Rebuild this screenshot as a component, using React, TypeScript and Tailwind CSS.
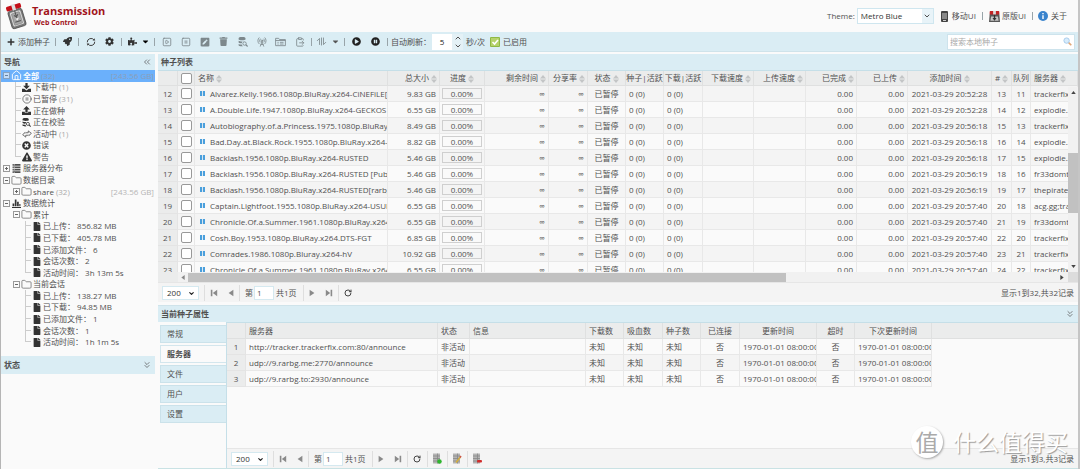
import React from "react";
import {
  FaPlus, FaRocket, FaCog, FaPuzzlePiece, FaCaretDown, FaTrash, FaPlayCircle, FaPauseCircle,
  FaTimesCircle, FaExclamationTriangle, FaFile, FaPenSquare,
} from "react-icons/fa";
import {
  House, CirclePause, Folder, SquarePlay, SquarePause, RadioTower, ClipboardPaste,
  ChevronsLeft, ChevronsDown, ChevronDown, ChevronUp, RotateCw,
} from "lucide-react";

const torrents: [number, string, string, string, number, string][] = [
  [12, "Alvarez.Kelly.1966.1080p.BluRay.x264-CiNEFiLE[rarbg]", "9.83 GB", "20:52:28", 13, "trackerfix.com"],
  [13, "A.Double.Life.1947.1080p.BluRay.x264-GECKOS", "6.55 GB", "20:52:28", 14, "explodie.org"],
  [14, "Autobiography.of.a.Princess.1975.1080p.BluRay.x264", "8.49 GB", "20:56:18", 15, "trackerfix.com"],
  [15, "Bad.Day.at.Black.Rock.1955.1080p.BluRay.x264-AMIABLE", "8.82 GB", "20:56:18", 16, "explodie.org"],
  [16, "Backlash.1956.1080p.BluRay.x264-RUSTED", "5.46 GB", "20:56:18", 17, "explodie.org"],
  [17, "Backlash.1956.1080p.BluRay.x264-RUSTED [PublicHD]", "5.46 GB", "20:56:19", 18, "fr33domtracker"],
  [18, "Backlash.1956.1080p.BluRay.x264-RUSTED[rarbg]", "5.46 GB", "20:56:19", 19, "thepiratebay"],
  [19, "Captain.Lightfoot.1955.1080p.BluRay.x264-USURY", "6.55 GB", "20:57:40", 20, "acg.gg;tracker"],
  [20, "Chronicle.Of.a.Summer.1961.1080p.BluRay.x264", "6.55 GB", "20:57:40", 21, "fr33domtracker"],
  [21, "Cosh.Boy.1953.1080p.BluRay.x264.DTS-FGT", "6.85 GB", "20:57:40", 22, "trackerfix.com"],
  [22, "Comrades.1986.1080p.Bluray.x264-hV", "10.92 GB", "20:57:40", 23, "trackerfix.com"],
  [23, "Chronicle.Of.a.Summer.1961.1080p.BluRay.x264-FGT", "6.55 GB", "20:57:40", 24, "trackerfix.com"],
];

const trackers = [
  "http://tracker.trackerfix.com:80/announce",
  "udp://9.rarbg.me:2770/announce",
  "udp://9.rarbg.to:2930/announce",
];

type IconProps = { className?: string };

const DownloadIcon = ({ className }: IconProps) => (
  <svg viewBox="0 0 16 16" className={className} fill="currentColor">
    <path d="M6 0h4v5h4L8 11 2 5h4zM0 10h4l4 3.500 4-3.500h4v6H0z" />
  </svg>
);
const UploadIcon = ({ className }: IconProps) => (
  <svg viewBox="0 0 16 16" className={className} fill="currentColor">
    <path d="M6 11h4V6h4L8 0 2 6h4zM0 10h5v2h6v-2h5v6H0z" />
  </svg>
);
const VerifyIcon = ({ className }: IconProps) => (
  <svg viewBox="0 0 16 16" className={className} fill="currentColor">
    <path d="M1 2c0-2.700 11-2.700 11 0v2c0 1.500-11 1.500-11 0zM1 6c2 1.400 7 1.300 9 .600A4 4 0 0 0 6 10c-3 .300-5-.500-5-1.500zM1 11c1 .800 3 1 5 1 .300 1 1 2 2 2.800-3 .300-7 0-7-1.500z" />
    <circle cx="10.500" cy="10.500" r="2.700" fill="none" stroke="currentColor" strokeWidth="1.400" />
    <path d="m12 13 1.300-1.300L16 14.500 14.700 16z" />
  </svg>
);
const ActiveIcon = ({ className }: IconProps) => (
  <svg viewBox="0 0 16 16" className={className} fill="none" stroke="currentColor" strokeWidth="1.300" strokeLinejoin="round">
    <path d="M6 6h4V3l5 4-4 3.500V9M10 10H6v3L1 9l4-3.500V7" />
  </svg>
);
const ServersIcon = ({ className }: IconProps) => (
  <svg viewBox="0 0 16 16" className={className} fill="currentColor">
    <path d="M1 0h14v3H1zM1 4.300h14v3H1zM1 8.600h14v3H1zM1 13h14v3H1z" />
    <path d="M3 1h2v1H3zM3 5.300h2v1H3zM3 9.600h2v1H3zM3 14h2v1H3z" fill="#fafafa" />
  </svg>
);
const StatsIcon = ({ className }: IconProps) => (
  <svg viewBox="0 0 16 16" className={className} fill="currentColor">
    <path d="M0 14h16v2H0zM1 8h3v5H1zM5 1h3v12H5zM9 5h3v8H9zM13 9h2v4h-2z" />
  </svg>
);
const FolderListIcon = ({ className }: IconProps) => (
  <svg viewBox="0 0 18 16" className={className} fill="none" stroke="currentColor" strokeWidth="1.400">
    <path d="M1 14V2h5l1.500 2H17v10zM1 5.500h16M4 8.500h2M8 8.500h6M4 11.300h2M8 11.300h6" />
  </svg>
);
const RefreshIcon = ({ className }: IconProps) => (
  <svg viewBox="0 0 16 16" className={className} fill="none" stroke="currentColor" strokeWidth="1.600">
    <path d="M2 8.500A6 6 0 0 1 13 5M14 7.500A6 6 0 0 1 3 11" />
    <path d="M10.500 5.500h4.300L13.500 2zM5.500 10.500H1.200L2.500 14z" fill="currentColor" stroke="none" />
  </svg>
);
const ArrowsIcon = ({ className }: IconProps) => (
  <svg viewBox="0 0 18 16" className={className} fill="none" stroke="currentColor" strokeWidth="1.500">
    <path d="M1 7l4.500-4.500V14M9 1v14M12.500 1v12.500L17 9" />
  </svg>
);
const Logo = ({ className }: IconProps) => (
  <svg viewBox="0 0 64 78" className={className}>
    <g transform="rotate(-17 32 40)">
      <rect x="11" y="19" width="42" height="52" rx="6" fill="#777" stroke="#454545" strokeWidth="2" />
      <rect x="16" y="24" width="32" height="41" rx="3" fill="#d8d8d8" />
      <rect x="20" y="28" width="24" height="34" rx="2" fill="#a7a7a7" stroke="#555" />
      <path d="M32 18v28M26 34l6 6 6-6M24 54h17" stroke="#555" strokeWidth="3" fill="none" />
      <path d="m27 44 5 7 6-7" fill="#eee" />
      <rect x="10" y="4" width="44" height="14" rx="5" fill="#c40f18" />
      <rect x="27" y="2" width="10" height="18" fill="#ddd" />
    </g>
  </svg>
);
const OriginalIcon = ({ className }: IconProps) => (
  <svg viewBox="0 0 16 16" className={className}>
    <path d="M1 4h14l1 12H0z" fill="#585858" />
    <path d="M3 8h10l1 6H2z" fill="#c6c6c6" />
    <path d="M7 3h2v7h2l-3 4-3-4h2z" fill="#333" />
    <rect x="1" y="0" width="14" height="5" rx="1" fill="#c32324" />
    <path d="M6 0h4v5H6z" fill="#ddd" />
  </svg>
);
const FirstIcon = ({ className }: IconProps) => (
  <svg viewBox="0 0 10 10" className={className} fill="currentColor"><path d="M1 1h2v8H1zM9 1v8L3.500 5z" /></svg>
);
const PrevIcon = ({ className }: IconProps) => (
  <svg viewBox="0 0 10 10" className={className} fill="currentColor"><path d="M8 1v8L2 5z" /></svg>
);
const SortIcon = () => (
  <svg viewBox="0 0 6 8" className="ml-0.5 inline h-2 w-1.5 shrink-0" fill="#c3c5c6"><path d="M0 3.500 3 0l3 3.500zM0 4.500h6L3 8z" /></svg>
);
const TrackerIcon = ({ kind }: { kind: "add" | "edit" | "remove" }) => (
  <svg viewBox="0 0 20 22" className="h-[11px] w-[10px]">
    <path d="M2 1h14v20H2z" fill="#b4b4b4" />
    <path d="M2 6h14M2 11h14M2 16h14M11 1v20" stroke="#858585" strokeWidth="1.500" />
    {kind === "add" && <circle cx="15" cy="17" r="4.500" fill="#2fb52f" />}
    {kind === "edit" && <><path d="M8 19 17 8" stroke="#d6b13c" strokeWidth="3" /><path d="m16 9 2-3" stroke="#cc5448" strokeWidth="3" /></>}
    {kind === "remove" && <rect x="10" y="14" width="10" height="5" rx="2" fill="#d02d2d" />}
  </svg>
);

const Expander = ({ open, className = "" }: { open: boolean; className?: string }) => (
  <svg viewBox="0 0 7 7" className={`size-[7px] shrink-0 ${className}`} fill="none" stroke="#666">
    <rect x=".5" y=".5" width="6" height="6" fill="#fafafa" stroke="#999" />
    <path d={open ? "M2 3.500h3" : "M2 3.500h3M3.500 2v3"} />
  </svg>
);

type Node = { level: number; label: string; note?: string; size?: string; icon: React.ReactNode; open?: boolean; last?: boolean };
const file = <FaFile className="h-[9px] w-[8px] text-[#333]" />;
const folder = <Folder className="size-[11px] text-[#666]" strokeWidth={1.6} />;
const nodes: Node[] = [
  { level: 1, label: "下载中", note: "(1)", icon: <DownloadIcon className="size-[9px] text-[#333]" /> },
  { level: 1, label: "已暂停", note: "(31)", icon: <CirclePause className="size-[10px]" strokeWidth={1.7} /> },
  { level: 1, label: "正在做种", icon: <UploadIcon className="size-[9px] text-[#333]" /> },
  { level: 1, label: "正在校验", icon: <VerifyIcon className="size-[9px] text-[#333]" /> },
  { level: 1, label: "活动中", note: "(1)", icon: <ActiveIcon className="size-[10px]" /> },
  { level: 1, label: "错误", icon: <FaTimesCircle className="size-[9px] text-[#333]" /> },
  { level: 1, label: "警告", icon: <FaExclamationTriangle className="size-[10px] text-[#333]" />, last: true },
  { level: 0, label: "服务器分布", icon: <ServersIcon className="size-[9px]" />, open: false },
  { level: 0, label: "数据目录", icon: folder, open: true },
  { level: 1, label: "share", note: "(32)", size: "[243.56 GB]", icon: folder, open: false },
  { level: 0, label: "数据统计", icon: <StatsIcon className="size-[9px] text-[#333]" />, open: true },
  { level: 1, label: "累计", icon: folder, open: true },
  { level: 2, label: "已上传： 856.82 MB", icon: file },
  { level: 2, label: "已下载： 405.78 MB", icon: file },
  { level: 2, label: "已添加文件： 6", icon: file },
  { level: 2, label: "会话次数： 2", icon: file },
  { level: 2, label: "活动时间： 3h 13m 5s", icon: file, last: true },
  { level: 1, label: "当前会话", icon: folder, open: true },
  { level: 2, label: "已上传： 138.27 MB", icon: file },
  { level: 2, label: "已下载： 94.85 MB", icon: file },
  { level: 2, label: "已添加文件： 1", icon: file },
  { level: 2, label: "会话次数： 1", icon: file },
  { level: 2, label: "活动时间： 1h 1m 5s", icon: file, last: true },
];

function TreeRow({ n }: { n: Node }) {
  return (
    <li className="flex min-h-0 items-center whitespace-pre pl-0.5 pr-px">
      {n.level === 2 && <span className="w-[10px] shrink-0" />}
      {n.level > 0 && n.open === undefined && (
        <span className="flex w-[18px] shrink-0 justify-end self-stretch">
          <span className={`w-[6px] border-l border-[#ccc] ${n.last ? "h-1/2" : "h-full"}`} />
          <span className="-ml-[5px] h-1/2 w-[5px] border-b border-[#ccc]" />
        </span>
      )}
      {n.level === 1 && n.open !== undefined && <span className="w-[10px] shrink-0" />}
      {n.open !== undefined && <Expander open={n.open} className="mr-px" />}
      <span className="flex w-[11px] shrink-0 justify-center">{n.icon}</span>
      <span className="ml-px">{n.label}</span>
      {n.note && <span className="ml-0.5 text-[#aaa]">{n.note}</span>}
      {n.size && <span className="ml-auto text-[#b5b5b5]">{n.size}</span>}
    </li>
  );
}

const Sep = ({ className = "" }: { className?: string }) => <span className={`h-2 w-px shrink-0 bg-[#98a4a9] ${className}`} />;

function ToolButton({ label, className = "", children }: { label: string; className?: string; children: React.ReactNode }) {
  return <button type="button" aria-label={label} className={`flex h-4 shrink-0 items-center justify-center ${className}`}>{children}</button>;
}

const PSep = () => <span className="h-4 w-px shrink-0 bg-[#dedede]" />;

function Pager({ id, summary, children }: { id: string; summary: string; children?: React.ReactNode }) {
  return (
    <div className="flex h-5 shrink-0 items-center border-t border-[#e6e6e6] bg-[#f4f4f4] pl-1 pr-1">
      <span className="relative flex">
        <select aria-label={`${id} 每页条数`} defaultValue="200" className="h-[14px] w-[37px] appearance-none border border-[#d5e9f0] bg-white pl-1 leading-3 text-[#333]">
          <option>200</option>
        </select>
        <ChevronDown className="pointer-events-none absolute right-1 top-1 size-[7px] text-[#222]" strokeWidth={4} />
      </span>
      <span className="w-[5px]" /><PSep />
      <ToolButton label="首页" className="w-[17px] text-[#8a8a8a]"><FirstIcon className="size-2" /></ToolButton>
      <ToolButton label="上一页" className="w-[17px] text-[#8a8a8a]"><PrevIcon className="size-2" /></ToolButton>
      <PSep />
      <label htmlFor={id} className="ml-[5px] mr-px">第</label>
      <input id={id} defaultValue="1" className="h-[14px] w-5 border border-[#d5e9f0] bg-white pl-0.5" />
      <span className="ml-0.5 mr-1.5">共1页</span>
      <PSep />
      <ToolButton label="下一页" className="w-[17px] text-[#8a8a8a]"><PrevIcon className="size-2 rotate-180" /></ToolButton>
      <ToolButton label="末页" className="w-[17px] text-[#8a8a8a]"><FirstIcon className="size-2 rotate-180" /></ToolButton>
      <PSep />
      <ToolButton label="刷新" className="w-[19px] text-[#444]"><RotateCw className="size-2" strokeWidth={3} /></ToolButton>
      {children}
      <span className="ml-auto">{summary}</span>
    </div>
  );
}

const th = "border-b border-r border-[#dfe0e0] font-normal whitespace-nowrap";
const td = "border-b border-r border-[#e8e8e8] px-[3px] overflow-hidden whitespace-nowrap";
const box = "block size-[11px] appearance-none rounded-xs border border-[#999] bg-white";

function TorrentTable() {
  const heads: [string, string, boolean][] = [
    ["名称", "px-[3px] text-left", true], ["总大小", "px-0.5 text-right", true], ["进度", "px-0.5 text-center", true], ["剩余时间", "px-0.5 text-right", true],
    ["分享率", "px-0.5 text-right", true], ["状态", "px-0.5 text-center", true], ["种子|活跃", "text-center", false], ["下载|活跃", "text-center", false],
    ["下载速度", "px-0.5 text-right", true], ["上传速度", "px-0.5 text-right", true], ["已完成", "px-0.5 text-right", true], ["已上传", "px-0.5 text-right", true],
    ["添加时间", "px-0.5 text-center", true], ["#", "px-0.5 text-center", true], ["队列", "text-center", false], ["服务器", "px-[3px] text-left", true],
  ];
  return (
    <table className="w-full table-fixed border-separate border-spacing-0">
      <colgroup>
        <col className="w-[20px]" /><col className="w-[17px]" /><col /><col className="w-[52px]" /><col className="w-[45px]" />
        <col className="w-[64px]" /><col className="w-[39px]" /><col className="w-[38px]" /><col className="w-[38px]" />
        <col className="w-[39px]" /><col className="w-[51px]" /><col className="w-[52px]" /><col className="w-[51px]" />
        <col className="w-[51px]" /><col className="w-[84px]" /><col className="w-[20px]" /><col className="w-[19px]" /><col className="w-[47px]" />
      </colgroup>
      <thead className="bg-[#ebecec]">
        <tr className="h-[15px]">
          <th className={th} />
          <th className={`${th} px-[3px]`}><input type="checkbox" aria-label="全选" className={box} /></th>
          {heads.map(([t, a, s]) => <th key={t} className={`${th} ${a}`}>{t}{s && <SortIcon />}</th>)}
        </tr>
      </thead>
      <tbody>
        {torrents.map(([n, name, size, time, q, server], i) => (
          <tr key={n} className={`h-4 ${i % 2 ? "bg-[#fafafa]" : "bg-[#f4f4f4]"}`}>
            <td className="border-b border-r border-[#e4e4e4] bg-[#ebecec] text-center">{n}</td>
            <td className="border-b border-r border-[#e8e8e8] px-[3px]"><input type="checkbox" aria-label={name} className={box} /></td>
            <td className="overflow-hidden whitespace-nowrap border-b border-r border-[#e8e8e8] pl-[5px]">
              <div className="flex items-center overflow-hidden">
                <svg viewBox="0 0 6 6" className="mr-[5px] size-[5px] shrink-0" fill="#4a9fdc"><path d="M0 0h2.500v6H0zM3.500 0H6v6H3.500z" /></svg>
                {name}
              </div>
            </td>
            <td className={`${td} text-right`}>{size}</td>
            <td className="border-b border-r border-[#e8e8e8] px-0.5"><div className="h-[11px] border border-[#cfcfcf] text-center leading-[9px]">0.00%</div></td>
            <td className={`${td} text-right`}>∞</td>
            <td className={`${td} text-right`}>∞</td>
            <td className={`${td} text-center`}>已暂停</td>
            <td className={td}>0 (0)</td>
            <td className={td}>0 (0)</td>
            <td className={td} />
            <td className={td} />
            <td className={`${td} text-right`}>0.00</td>
            <td className={`${td} text-right`}>0.00</td>
            <td className={`${td} text-center`}>2021-03-29 {time}</td>
            <td className={`${td} text-center`}>{q}</td>
            <td className={`${td} text-center`}>{q - 2}</td>
            <td className={td}>{server}</td>
          </tr>
        ))}
      </tbody>
    </table>
  );
}

function TrackerTable() {
  const heads: [string, string][] = [
    ["服务器", "text-left"], ["状态", "text-left"], ["信息", "text-left"], ["下载数", "text-left"], ["吸血数", "text-left"],
    ["种子数", "text-left"], ["已连接", "text-center"], ["更新时间", "text-center"], ["超时", "text-center"], ["下次更新时间", "text-center"],
  ];
  const date = "border-b border-r border-[#e8e8e8] pl-[3px] overflow-hidden whitespace-nowrap";
  return (
    <table className="w-full table-fixed border-separate border-spacing-0">
      <colgroup>
        <col className="w-[19px]" /><col className="w-[192px]" /><col className="w-[32px]" /><col className="w-[116px]" />
        <col className="w-[38px]" /><col className="w-[39px]" /><col className="w-[38px]" /><col className="w-[39px]" />
        <col className="w-[77px]" /><col className="w-[38px]" /><col className="w-[77px]" /><col />
      </colgroup>
      <thead className="bg-[#ebecec]">
        <tr className="h-4">
          <th className={th} />
          {heads.map(([t, a]) => <th key={t} className={`${th} px-[3px] ${a}`}>{t}</th>)}
          <th className="border-b border-[#dfe0e0]" />
        </tr>
      </thead>
      <tbody>
        {trackers.map((t, i) => (
          <tr key={t} className={`h-4 ${i % 2 ? "bg-[#f4f4f4]" : "bg-[#fafafa]"}`}>
            <td className="border-b border-r border-[#e4e4e4] bg-[#ebecec] text-center">{i + 1}</td>
            <td className={td}>{t}</td>
            <td className={td}>非活动</td>
            <td className={td} />
            <td className={td}>未知</td>
            <td className={td}>未知</td>
            <td className={td}>未知</td>
            <td className={`${td} text-center`}>否</td>
            <td className={date}>1970-01-01 08:00:00</td>
            <td className={`${td} text-center`}>否</td>
            <td className={date}>1970-01-01 08:00:00</td>
            <td className="bg-[#fafafa]" />
          </tr>
        ))}
      </tbody>
    </table>
  );
}

const panelHead = "flex shrink-0 items-center justify-between bg-[#daedf4] px-[3px] font-bold";

export default function App() {
  return (
    <div className="flex h-screen flex-col overflow-hidden border-l border-r-2 border-l-[#b5b5b5] border-r-[#c5c5c5] bg-[#fafafa] font-['Open_Sans','Noto_Sans_CJK_SC',sans-serif] text-[8px] leading-[10px] text-[#505050]">
      <header className="flex h-8 shrink-0 items-center pr-[11px]">
        <Logo className="ml-1 h-[27px] w-[23px]" />
        <h1 className="ml-1 flex flex-col font-bold text-[#a1141b]">
          <span className="text-[11px] leading-[14px]">Transmission</span>
          <span className="ml-0.5 text-[7px] leading-[10px]">Web Control</span>
        </h1>
        <div className="ml-auto flex items-center">
          <label htmlFor="theme">Theme:</label>
          <span className="relative ml-0.5 flex">
            <select id="theme" className="h-4 w-[77px] appearance-none border border-[#cfe6ef] bg-white pl-[3px] text-[#333]"><option>Metro Blue</option></select>
            <span className="pointer-events-none absolute inset-y-px right-px flex w-[11px] items-center justify-center bg-[#e8f3f8]"><ChevronDown className="size-[8px]" strokeWidth={3} /></span>
          </span>
          <a href="#mobile" className="ml-[6px] flex items-center">
            <svg viewBox="0 0 9 11" className="mr-[3px] h-[11px] w-[9px]"><rect x="1" width="7" height="11" rx="1" fill="#444" /><rect x="2" y="2" width="5" height="6" fill="#888" /><path d="M3 9.500h3" stroke="#ccc" /></svg>
            移动UI
          </a>
          <Sep className="ml-1.5" />
          <a href="#original" className="ml-1.5 flex items-center"><OriginalIcon className="mr-0.5 size-[11px]" />原版UI</a>
          <Sep className="ml-1.5" />
          <a href="#about" className="ml-[5px] flex items-center">
            <svg viewBox="0 0 10 10" className="mr-[3px] size-[10px]"><circle cx="5" cy="5" r="5" fill="#3a83cc" /><path d="M4.300 2h1.400v1.300H4.300zM4.300 4.200h1.400V8H4.300z" fill="#fff" /></svg>
            关于
          </a>
        </div>
      </header>

      <div className="flex h-5 shrink-0 items-center border-b border-[#cfe3ea] bg-[#daedf4] pl-1.5 pr-[3px]">
        <button type="button" className="flex items-center gap-[3px]"><FaPlus className="size-[8px] text-[#333]" />添加种子</button>
        <Sep className="ml-[5px]" />
        <ToolButton label="快速开始" className="w-[22px] text-[#333]"><FaRocket className="size-[9px]" /></ToolButton>
        <Sep />
        <ToolButton label="重新载入" className="ml-[3px] w-[18px] text-[#444]"><RefreshIcon className="size-[10px]" /></ToolButton>
        <ToolButton label="系统设置" className="w-[18px] text-[#333]"><FaCog className="size-[9px]" /></ToolButton>
        <Sep className="ml-[3px]" />
        <ToolButton label="插件" className="w-[32px] gap-1 pl-0.5 text-[#333]"><FaPuzzlePiece className="size-[9px]" /><FaCaretDown className="size-[9px] text-black" /></ToolButton>
        <Sep />
        <div className="flex items-center text-[#7d888c]">
          <ToolButton label="开始" className="ml-0.5 w-[19px]"><SquarePlay className="size-[10px]" /></ToolButton>
          <ToolButton label="暂停" className="w-[19px]"><SquarePause className="size-[10px]" /></ToolButton>
          <ToolButton label="重命名" className="w-[19px]"><FaPenSquare className="size-[10px]" /></ToolButton>
          <ToolButton label="删除" className="w-[19px]"><FaTrash className="size-[9px]" /></ToolButton>
          <ToolButton label="校验" className="w-[19px]"><VerifyIcon className="size-[10px]" /></ToolButton>
          <ToolButton label="获取更多 Peer" className="w-[19px]"><RadioTower className="size-[10px]" /></ToolButton>
          <ToolButton label="变更目录" className="w-[19px]"><FolderListIcon className="h-[10px] w-[11px]" /></ToolButton>
          <ToolButton label="粘贴" className="w-[19px]"><ClipboardPaste className="size-[10px]" /></ToolButton>
          <Sep className="ml-0.5" />
          <ToolButton label="队列" className="w-[32px] gap-1"><ArrowsIcon className="h-[9px] w-[11px]" /><FaCaretDown className="size-[9px] text-[#555]" /></ToolButton>
        </div>
        <Sep />
        <ToolButton label="全部开始" className="ml-0.5 w-[19px] text-[#222]"><FaPlayCircle className="size-[9px]" /></ToolButton>
        <ToolButton label="全部暂停" className="w-[19px] text-[#222]"><FaPauseCircle className="size-[9px]" /></ToolButton>
        <Sep className="ml-0.5" />
        <label htmlFor="interval" className="ml-[3px]">自动刷新：</label>
        <input id="interval" defaultValue="5" className="ml-px h-4 w-5 bg-white text-center text-[#222]" />
        <span className="flex h-4 w-[11px] flex-col items-center justify-between bg-[#e4f1f6]"><ChevronUp className="size-[8px]" strokeWidth={3} /><ChevronDown className="size-[8px]" strokeWidth={3} /></span>
        <span className="ml-[3px]">秒/次</span>
        <button type="button" className="ml-[5px] flex items-center gap-[3px]">
          <svg viewBox="0 0 10 10" className="size-[10px]"><rect width="10" height="10" rx="1" fill="#8fb944" /><rect x="1" y="1" width="8" height="8" fill="#b5d26c" /><path d="m2.500 5 2 2 3.500-4" fill="none" stroke="#fff" strokeWidth="1.600" /></svg>
          已启用
        </button>
        <span className="ml-auto flex h-4 w-32 items-center border border-[#cde3ec] bg-white pr-0.5">
          <input aria-label="搜索本地种子" placeholder="搜索本地种子" className="w-full min-w-0 bg-transparent pl-0.5 outline-none placeholder:text-[#aaa]" />
          <svg viewBox="0 0 10 10" className="size-[9px] shrink-0"><path d="m6 6 3.200 3.200" stroke="#e0a878" strokeWidth="1.800" /><circle cx="4" cy="4" r="3" fill="#d8ecfb" stroke="#a3c8ea" /></svg>
        </span>
      </div>

      <main className="flex min-h-0 flex-1 gap-[3px] pt-0.5">
        <aside className="flex w-[154px] shrink-0 flex-col">
          <div className={`${panelHead} h-4`}>导航<ChevronsLeft className="size-[10px]" strokeWidth={1.7} /></div>
          <ul className="grid h-[278px] shrink-0 auto-rows-fr">
            <li className="flex min-h-0 items-center bg-[#6bb0fb] pl-0.5 pr-px">
              <Expander open className="mr-px opacity-60" />
              <House className="size-[11px] text-white" strokeWidth={2} />
              <span className="ml-px font-bold text-white">全部</span>
              <span className="ml-0.5 text-[#8b9fb8]">(32)</span>
              <span className="ml-auto text-[#8b9fb8]">[243.56 GB]</span>
            </li>
            {nodes.map((n, i) => <TreeRow key={i} n={n} />)}
          </ul>
          <div className={`${panelHead} mt-2 h-[18px]`}>状态<ChevronsDown className="size-[10px]" strokeWidth={1.7} /></div>
        </aside>

        <section className="flex min-w-0 flex-1 flex-col">
          <div className={`${panelHead} h-4`}>种子列表</div>
          <div className="relative h-[212px] shrink-0 overflow-hidden border-t border-[#c5dfe8]">
            <TorrentTable />
            <div className="absolute bottom-[10px] right-0 top-[16px] flex w-[10px] flex-col items-center justify-between bg-[#f1f1f1] py-1">
              <svg viewBox="0 0 6 4" className="h-[3px] w-[5px]"><path d="M0 4 3 0l3 4z" fill="#444" /></svg>
              <span className="absolute inset-x-0 top-[66px] h-[60px] bg-[#c1c1c1]" />
              <svg viewBox="0 0 6 4" className="h-[3px] w-[5px]"><path d="M0 0h6L3 4z" fill="#444" /></svg>
            </div>
            <div className="absolute inset-x-0 bottom-0 flex h-[10px] items-center bg-[#f1f1f1]">
              <span className="h-full w-5 bg-[#ebecec]" />
              <svg viewBox="0 0 4 6" className="mx-[3px] h-[5px] w-[4px]"><path d="M4 0v6L0 3z" fill="#888" /></svg>
              <span className="h-[9px] w-[65%] bg-[#c1c1c1]" />
              <svg viewBox="0 0 4 6" className="ml-auto mr-1 h-[5px] w-[4px]"><path d="M0 0v6l4-3z" fill="#444" /></svg>
              <span className="h-full w-[10px] bg-[#dcdcdc]" />
            </div>
          </div>
          <Pager id="torrent-page" summary="显示1到32,共32记录" />

          <div className={`${panelHead} mt-[3px] h-[17px] border-t border-[#cfe3ea]`}>当前种子属性<ChevronsDown className="size-[10px]" strokeWidth={1.7} /></div>
          <div className="flex min-h-0 flex-1 border-b border-[#c9e2e4]">
            <nav className="flex w-[69px] shrink-0 flex-col gap-0.5 border-r border-[#c5dfe8] pl-0.5 pt-[3px]">
              {["常规", "服务器", "文件", "用户", "设置"].map((t) => (
                <button key={t} type="button" className={t === "服务器" ? "h-[18px] border border-r-0 border-[#d3e6ed] bg-[#fafafa] pl-1.5 text-left font-bold" : "h-[18px] border border-r-0 border-[#cbe2ea] bg-[#daedf4] pl-1.5 text-left"}>{t}</button>
              ))}
            </nav>
            <div className="relative flex min-w-0 flex-1 flex-col border-t border-[#c5dfe8]">
              <div className="min-h-0 flex-1 overflow-hidden"><TrackerTable /></div>
              <Pager id="tracker-page" summary="显示1到3,共3记录">
                <PSep />
                <ToolButton label="添加服务器" className="w-[19px]"><TrackerIcon kind="add" /></ToolButton><PSep />
                <ToolButton label="编辑服务器" className="w-[19px]"><TrackerIcon kind="edit" /></ToolButton><PSep />
                <ToolButton label="删除服务器" className="w-[19px]"><TrackerIcon kind="remove" /></ToolButton>
              </Pager>
              <div className="pointer-events-none absolute bottom-2.5 right-2.5 flex items-center gap-2.5 text-white [text-shadow:1px_1px_1px_#999]">
                <span className="flex size-8 items-center justify-center rounded-full bg-white text-[23px] leading-8 text-[#aaa] shadow-[1px_1px_2px_#aaa] [text-shadow:none]">值</span>
                <span className="text-[23px] leading-8">什么值得买</span>
              </div>
            </div>
          </div>
        </section>
      </main>
    </div>
  );
}
